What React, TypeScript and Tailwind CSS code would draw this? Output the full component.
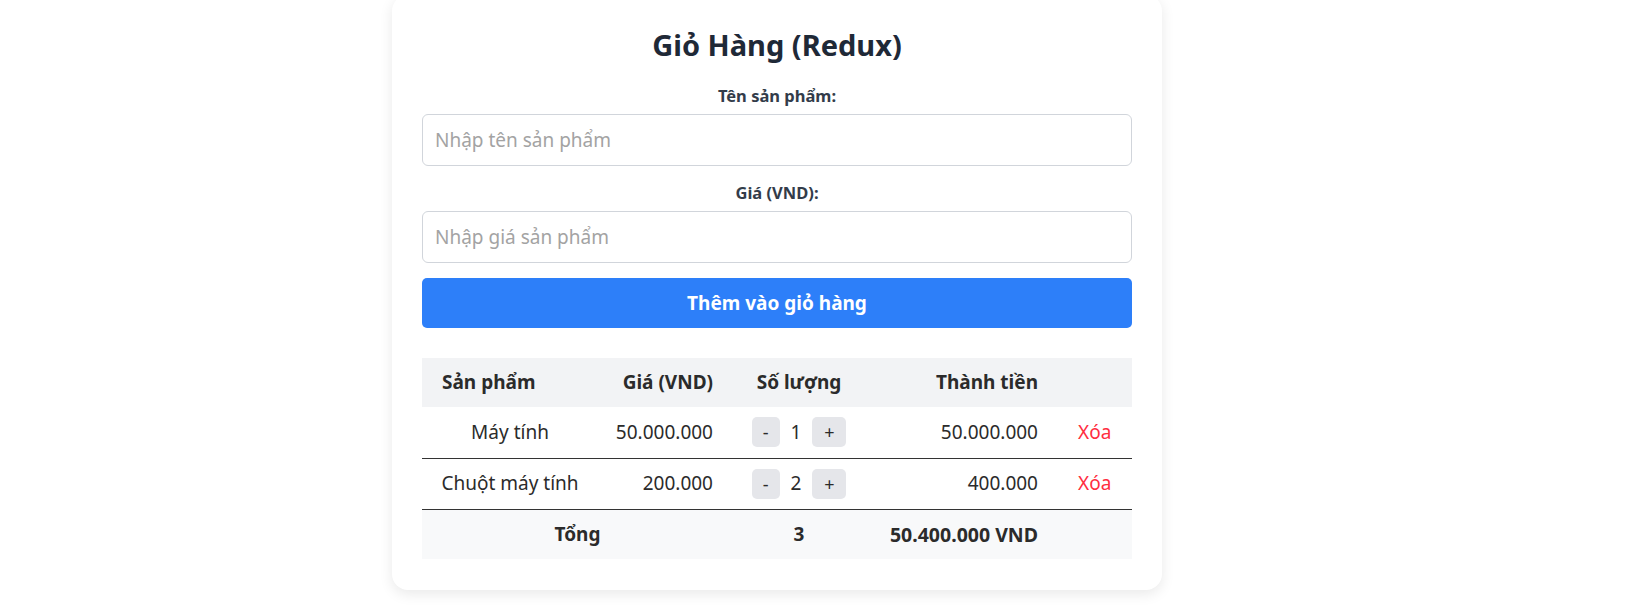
import { useState } from "react";

type CartItem = {
  id: number;
  name: string;
  price: number;
  qty: number;
};

const initialItems: CartItem[] = [
  { id: 1, name: "Máy tính", price: 50000000, qty: 1 },
  { id: 2, name: "Chuột máy tính", price: 200000, qty: 2 },
];

const fmt = (n: number) => n.toString().replace(/\B(?=(\d{3})+(?!\d))/g, ".");

const App = () => {
  const [items, setItems] = useState<CartItem[]>(initialItems);
  const [name, setName] = useState("");
  const [price, setPrice] = useState("");

  const changeQty = (id: number, delta: number) => {
    setItems((prev) =>
      prev.map((it) =>
        it.id === id ? { ...it, qty: Math.max(1, it.qty + delta) } : it
      )
    );
  };

  const removeItem = (id: number) => {
    setItems((prev) => prev.filter((it) => it.id !== id));
  };

  const addItem = () => {
    const p = Number(price);
    if (!name.trim() || !p) return;
    setItems((prev) => [
      ...prev,
      { id: Date.now(), name: name.trim(), price: p, qty: 1 },
    ]);
    setName("");
    setPrice("");
  };

  const totalQty = items.reduce((s, it) => s + it.qty, 0);
  const totalPrice = items.reduce((s, it) => s + it.qty * it.price, 0);

  return (
    <div className="min-h-[613px] bg-white font-['Noto_Sans',sans-serif] text-[#2b2b2b]">
      <div className="ml-[392px] -mt-[5px] w-[770px] rounded-2xl bg-white px-[30px] pt-[30px] pb-[31px] shadow-[0_4px_14px_rgba(0,0,0,0.09)]">
        <h1 className="mb-[19px] text-center text-[29px] font-bold leading-[40px] text-[#1f2937]">
          Giỏ Hàng (Redux)
        </h1>

        <div className="mb-[15px]">
          <label className="mb-[6px] block text-center text-[16.5px] font-bold leading-6 text-[#333c4a]">
            Tên sản phẩm:
          </label>
          <input
            value={name}
            onChange={(e) => setName(e.target.value)}
            placeholder="Nhập tên sản phẩm"
            className="h-[52px] w-full rounded-md border border-[#d1d5db] px-3 text-[19px] outline-none placeholder:text-[#a3a3a3]"
          />
        </div>

        <div className="mb-[15px]">
          <label className="mb-[6px] block text-center text-[16.5px] font-bold leading-6 text-[#333c4a]">
            Giá (VND):
          </label>
          <input
            value={price}
            onChange={(e) => setPrice(e.target.value)}
            placeholder="Nhập giá sản phẩm"
            className="h-[52px] w-full rounded-md border border-[#d1d5db] px-3 text-[19px] outline-none placeholder:text-[#a3a3a3]"
          />
        </div>

        <button
          onClick={addItem}
          className="h-[50px] w-full rounded-[5px] bg-[#2d7ff9] text-[19px] font-bold text-white"
        >
          Thêm vào giỏ hàng
        </button>

        <table className="mt-[30px] w-full table-fixed border-collapse text-[19px]">
          <colgroup>
            <col className="w-[176px]" />
            <col className="w-[135px]" />
            <col className="w-[132px]" />
            <col className="w-[193px]" />
            <col className="w-[74px]" />
          </colgroup>
          <thead>
            <tr className="h-[49px] bg-[#f2f3f5]">
              <th className="px-5 text-left font-bold">Sản phẩm</th>
              <th className="pl-2 pr-5 text-right font-bold whitespace-nowrap">Giá (VND)</th>
              <th className="px-3 text-center font-bold whitespace-nowrap">Số lượng</th>
              <th className="px-5 text-right font-bold">Thành tiền</th>
              <th className="px-5"></th>
            </tr>
          </thead>
          <tbody>
            {items.map((it) => (
              <tr key={it.id} className="h-[51px] border-b border-[#333]">
                <td className="px-3 text-center whitespace-nowrap">{it.name}</td>
                <td className="pl-2 pr-5 text-right">{fmt(it.price)}</td>
                <td className="px-3">
                  <div className="flex items-center justify-center">
                    <button
                      onClick={() => changeQty(it.id, -1)}
                      className="h-[30px] w-[28px] rounded-[5px] bg-[#e5e6ea] text-[18px] leading-none"
                    >
                      -
                    </button>
                    <span className="mx-[11px]">{it.qty}</span>
                    <button
                      onClick={() => changeQty(it.id, 1)}
                      className="h-[30px] w-[34px] rounded-[5px] bg-[#e5e6ea] text-[18px] leading-none"
                    >
                      +
                    </button>
                  </div>
                </td>
                <td className="px-5 text-right">{fmt(it.price * it.qty)}</td>
                <td className="px-5">
                  <button
                    onClick={() => removeItem(it.id)}
                    className="text-[#ff2e3f]"
                  >
                    Xóa
                  </button>
                </td>
              </tr>
            ))}
          </tbody>
          <tfoot>
            <tr className="h-[50px] bg-[#f8f9fa] font-bold">
              <td colSpan={2} className="px-5 text-center">
                Tổng
              </td>
              <td className="px-3 text-center">{totalQty}</td>
              <td className="px-5 text-right whitespace-nowrap text-[19.5px]">
                {fmt(totalPrice)} VND
              </td>
              <td></td>
            </tr>
          </tfoot>
        </table>
      </div>
    </div>
  );
};

export default App;
